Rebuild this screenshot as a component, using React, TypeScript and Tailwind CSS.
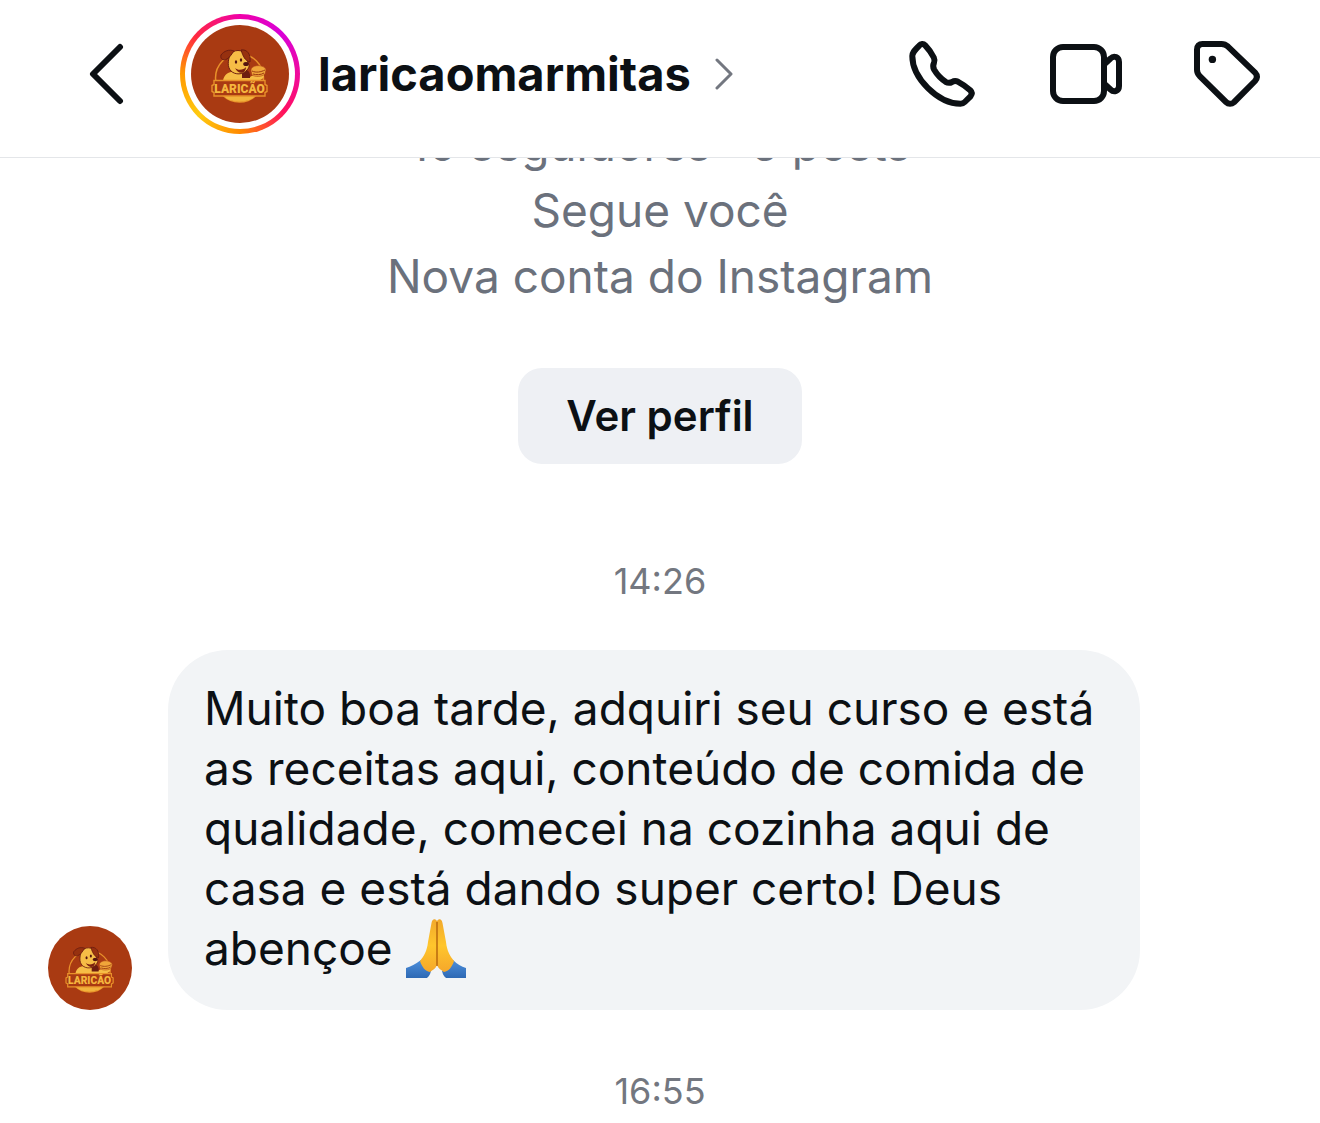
import React from 'react';

const MESSAGE =
  'Muito boa tarde, adquiri seu curso e está as receitas aqui, conteúdo de comida de qualidade, comecei na cozinha aqui de casa e está dando super certo! Deus abençoe';

const Logo: React.FC<{ className: string }> = ({ className }) => (
  <svg viewBox="0 0 98 98" className={className} role="img" aria-label="Laricão">
    <circle cx="49" cy="49" r="49" fill="#a93a12" />
    <circle cx="48.500" cy="53" r="24" fill="none" stroke="#e8912a" strokeWidth="1.500" />
    {/* shoulders and raised arm */}
    <path d="M32 57c0-5 3-9 8-10l14 1c2 1 2 4 5 4l5-3 9 1c0 4-4 6-10 6l-4 2z" fill="#f6bd46" />
    <path d="M51 46c5-3 9 1 8 7l-8 0z" fill="#6d1d10" />
    {/* head */}
    <path d="M39 30c3-6 13-6 16 0 2 3 1 6 2 8 2 2 1 5-1 7-4 5-12 5-16 1-4-4-3-11-1-16z" fill="#f6bd46" stroke="#6d1d10" strokeWidth="1" />
    <path d="M43 26c-5-2-10 0-13 4-1 4 2 6 6 4 3-2 4-4 7-8zM50 25c6-1 10 4 9 12-5-1-7-6-9-12z" fill="#97310f" stroke="#6d1d10" strokeWidth="1" />
    <path d="M44 43c3 3 9 2 11-1 0 7-8 8-11 1z" fill="#7b200f" />
    <ellipse cx="55" cy="39" rx="2.800" ry="2" fill="#531410" />
    <ellipse cx="45" cy="37" rx="1.200" ry="1.800" fill="#531410" />
    <ellipse cx="50" cy="35" rx="1.200" ry="1.800" fill="#531410" />
    {/* burger */}
    <path d="M60 46c-1-7 14-7 15-1l-1 4c-3 3-10 3-13 1z" fill="#f0a63a" stroke="#a93a12" strokeWidth="0.600" />
    <path d="M61 46c4 2 9 1 13-1M62 49c3 1 8 1 11-1" fill="none" stroke="#9b3a10" strokeWidth="1" />
    <path d="M33 71h31c-5 7-25 8-31 0z" fill="#f2b33c" />
    <path d="M23 55.500h51v4l2 1v6l-2 1v3.500H23v-3.500l-2-1v-6l2-1z" fill="#a93a12" stroke="#e8912a" strokeWidth="1.400" />
    <text x="48.500" y="68" textAnchor="middle" fontSize="12" fontWeight="900" fill="#f5b53e" className="font-['Roboto',sans-serif]">
      LARICÃO
    </text>
  </svg>
);

const BackIcon: React.FC = () => (
  <svg viewBox="0 0 36 72" className="h-[72px] w-9" fill="none" stroke="currentColor" strokeWidth="6" strokeLinecap="round" strokeLinejoin="round">
    <path d="M32 9L5 36l27 27" />
  </svg>
);

const PhoneIcon: React.FC = () => (
  <svg viewBox="0 0 72 72" className="size-[72px]" fill="none" stroke="currentColor" strokeWidth="6" strokeLinejoin="round">
    <path d="M6.300 18C6.300 14.500 8 13 13 7.800C15 5.600 17.300 5.400 19.200 7.400C22.500 10.800 25.500 15 27.800 19.500C28.800 21.600 28.800 23 28 24.800C26.800 27.200 26.800 29.300 28.200 31.800C31 36.500 35 40.800 39.600 43.800C42 45.200 43.800 45.200 46 44C48 42.800 50 42.800 52.200 43.800C56.500 46 60.500 49 64.200 52.300C66 54 66.200 56.200 64.500 58.300L58.800 64C57.500 65.300 56.500 65.700 54.500 65.700C32 65.700 6.300 40 6.300 18Z" />
  </svg>
);

const VideoIcon: React.FC = () => (
  <svg viewBox="0 0 72 72" className="size-[72px]" fill="none" stroke="currentColor" strokeWidth="6">
    <rect x="3" y="9" width="51" height="54" rx="10" />
    <path d="M54 26.500L60.500 20.500C64 17 69 19 69 24V48C69 53 64 54.800 60.500 51.500L54 45.500" />
  </svg>
);

const TagIcon: React.FC = () => (
  <svg viewBox="0 0 72 72" className="size-[72px]" fill="none" stroke="currentColor" strokeWidth="6">
    <path d="M3 11.500C3 8 5 6 8.500 6H27.500C30 6 32 6.800 34 8.600L61 34.500C63.600 37.400 63.600 40 61 43L40 64.200C37.500 66.400 34.500 66.400 32 64L5.500 37.800C3.800 36 3 34.300 3 31.800Z" />
    <circle cx="18.400" cy="21.400" r="3.700" fill="currentColor" stroke="none" />
  </svg>
);

const PrayingHands: React.FC = () => (
  <svg viewBox="0 0 60 60" className="-mt-4 -mb-1 inline-block size-[60px] align-[-9px]" role="img" aria-label="🙏">
    <defs>
      <linearGradient id="skin" x1="0" y1="0" x2="0" y2="1">
        <stop offset="0" stopColor="#f2a92c" />
        <stop offset="0.500" stopColor="#ffc62c" />
        <stop offset="1" stopColor="#f5a72b" />
      </linearGradient>
      <linearGradient id="sleeve" x1="0" y1="0" x2="0" y2="1">
        <stop offset="0" stopColor="#4d8fdc" />
        <stop offset="1" stopColor="#2e69b4" />
      </linearGradient>
    </defs>
    <path d="M0 50Q7 48 15 42C17 48 20 52 25 53C24 57 23 58 21 60H0Z" fill="url(#sleeve)" />
    <path d="M60 50Q53 48 47 42C45 48 42 52 36 53C37 57 38 58 40 60H60Z" fill="url(#sleeve)" />
    <path d="M31 3C29 0 26 1 25.500 5L22 24C21 33 18 38 14 43C16 49 19 53 24 54C28 51 31 50 31 45Z" fill="url(#skin)" />
    <path d="M31 3C33 0 36 1 36.500 5L40 24C41 33 44 38 48 43C46 49 43 53 38 54C34 51 31 50 31 45Z" fill="url(#skin)" />
    <path d="M31 4V48" fill="none" stroke="#b8690e" strokeWidth="1.500" />
  </svg>
);

const Timestamp: React.FC<{ time: string }> = ({ time }) => (
  <time className="block text-center text-[36px] leading-9 text-[#737780]">{time}</time>
);

const App: React.FC = () => {
  return (
    <div className="min-h-screen overflow-hidden bg-white font-['Inter',sans-serif] text-[#0c1014]">
      <header className="sticky top-0 z-10 flex items-center border-b border-[#e4e6e9] bg-white pt-[14px] pr-[54px] pb-[23px] pl-[88px]">
        <button type="button" aria-label="Voltar">
          <BackIcon />
        </button>
        <a href="#perfil" className="ml-14 flex items-center">
          <span className="size-[120px] rounded-full bg-[conic-gradient(#f000a8,#d800d8_45deg,#f00a9c_90deg,#ff0f60_130deg,#ff8a00_180deg,#ffca10_225deg,#ff9a00_270deg,#ff2a40_310deg,#f000a8)] p-[5px]">
            <span className="block rounded-full bg-white p-[6px]">
              <Logo className="size-[98px]" />
            </span>
          </span>
          <span className="ml-[18px] text-[47px] leading-[60px] font-bold">laricaomarmitas</span>
          <svg viewBox="0 0 20 32" className="ml-6 h-8 w-5" fill="none" stroke="#737780" strokeWidth="3" strokeLinecap="round" strokeLinejoin="round">
            <path d="M2 2L16 16L2 30" />
          </svg>
        </a>
        <nav className="ml-auto flex gap-[72px]">
          <button type="button" aria-label="Ligar"><PhoneIcon /></button>
          <button type="button" aria-label="Chamada de vídeo"><VideoIcon /></button>
          <button type="button" aria-label="Etiqueta"><TagIcon /></button>
        </nav>
      </header>

      <main className="-mt-[47px]">
        <section className="flex flex-col items-center text-center text-[46px] leading-[66px] text-[#6b717c]">
          <p>10 seguidores · 6 posts</p>
          <p>Segue você</p>
          <p>Nova conta do Instagram</p>
          <button type="button" className="mt-[59px] h-24 rounded-3xl bg-[#eef0f4] px-12 text-[42px] leading-[60px] font-semibold text-[#0c1014]">
            Ver perfil
          </button>
        </section>

        <div className="mt-[99px]">
          <Timestamp time="14:26" />
        </div>

        <div className="mt-[51px] mr-[180px] ml-12 flex items-end gap-9">
          <Logo className="size-[84px] shrink-0" />
          <p className="flex-1 rounded-[60px] bg-[#f2f4f6] px-9 pt-7 pb-8 text-[46px] leading-[60px]">
            {MESSAGE} <PrayingHands />
          </p>
        </div>

        <div className="mt-[63px] pb-3">
          <Timestamp time="16:55" />
        </div>
      </main>
    </div>
  );
};

export default App;
